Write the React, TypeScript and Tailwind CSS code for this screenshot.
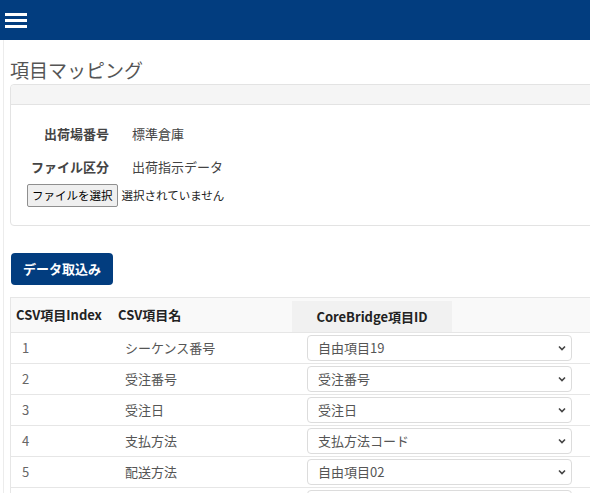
import React from "react";

interface MappingRow {
    index: number;
    name: string;
    target: string;
}

const rows: MappingRow[] = [
    { index: 1, name: "シーケンス番号", target: "自由項目19" },
    { index: 2, name: "受注番号", target: "受注番号" },
    { index: 3, name: "受注日", target: "受注日" },
    { index: 4, name: "支払方法", target: "支払方法コード" },
    { index: 5, name: "配送方法", target: "自由項目02" },
];

const font = { fontFamily: '"Noto Sans CJK JP", "Liberation Sans", sans-serif' };

const Chevron: React.FC = () => (
    <svg width="10" height="10" viewBox="0 0 10 10" className="shrink-0">
        <path d="M2 3.5 L5 6.5 L8 3.5" fill="none" stroke="#444" strokeWidth="1.6" />
    </svg>
);

const App: React.FC = () => {
    return (
        <div className="w-[590px] h-[493px] overflow-hidden bg-white text-[#333]" style={font}>
            {/* top bar */}
            <header className="h-[40px] bg-[#023d7f] flex items-center pl-[5px]">
                <div className="flex flex-col gap-[3px]">
                    <span className="block w-[22px] h-[3px] bg-white" />
                    <span className="block w-[22px] h-[3px] bg-white" />
                    <span className="block w-[22px] h-[3px] bg-white" />
                </div>
            </header>

            <div className="border-l border-[#ececec] ml-[3px] pl-[6px] w-[700px] h-[453px]">
                <h1 className="pt-[17px] h-[44px] text-[19px] leading-[26px] text-[#555] font-normal">項目マッピング</h1>

                {/* panel */}
                <div className="border border-[#e3e3e3] rounded-[4px] w-[640px] h-[142px]">
                    <div className="h-[20px] bg-[#f5f5f5] border-b border-[#e3e3e3] rounded-t-[4px]" />
                    <div className="pl-[16px] pt-[18px]">
                        <div className="flex items-center h-[22px] text-[13px]">
                            <span className="w-[82px] text-right font-bold text-[#444]">出荷場番号</span>
                            <span className="ml-[23px] text-[#444]">標準倉庫</span>
                        </div>
                        <div className="flex items-center h-[22px] mt-[11px] text-[13px]">
                            <span className="w-[82px] text-right font-bold text-[#444]">ファイル区分</span>
                            <span className="ml-[23px] text-[#444]">出荷指示データ</span>
                        </div>
                        <div className="flex items-center mt-[6px]">
                            <button className="h-[23px] px-[4px] border border-[#8f8f8f] rounded-[2px] bg-[#efefef] text-[11.5px] text-black">
                                ファイルを選択
                            </button>
                            <span className="ml-[4px] text-[11.5px] text-[#222]">選択されていません</span>
                        </div>
                    </div>
                </div>

                <button className="mt-[27px] h-[32px] w-[102px] ml-[1px] rounded-[4px] bg-[#023d7f] text-white text-[13px] font-bold">
                    データ取込み
                </button>

                {/* table */}
                <div className="mt-[12px] border-l border-t border-[#e6e6e6] w-[700px]">
                    <div className="flex h-[35px] bg-[#f9f9f9] border-b border-[#e6e6e6] text-[13px] font-bold text-[#222]">
                        <div className="w-[101px] pl-[5px] flex items-center">CSV項目Index</div>
                        <div className="w-[180px] pl-[6px] flex items-center">CSV項目名</div>
                        <div className="w-[160px] mt-[3px] bg-[#f1f1f1] flex items-center justify-center">CoreBridge項目ID</div>
                    </div>
                    {rows.map((row) => (
                        <div key={row.index} className="flex h-[31px] border-b border-[#e6e6e6] text-[13px] text-[#666]">
                            <div className="w-[101px] pl-[11px] flex items-center">{row.index}</div>
                            <div className="w-[195px] pl-[13px] flex items-center text-[#555]">{row.name}</div>
                            <div className="flex items-center">
                                <div className="w-[265px] h-[26px] border border-[#dcdcdc] rounded-[4px] bg-white flex items-center justify-between pl-[10px] pr-[4px] text-[#555]">
                                    <span>{row.target}</span>
                                    <Chevron />
                                </div>
                            </div>
                        </div>
                    ))}
                    {/* next row, only its top shows */}
                    <div className="flex h-[31px] pt-[2px]">
                        <div className="w-[296px]" />
                        <div className="w-[265px] h-[26px] border border-[#dcdcdc] rounded-[4px] bg-white" />
                    </div>
                </div>
            </div>
        </div>
    );
};

export default App;
